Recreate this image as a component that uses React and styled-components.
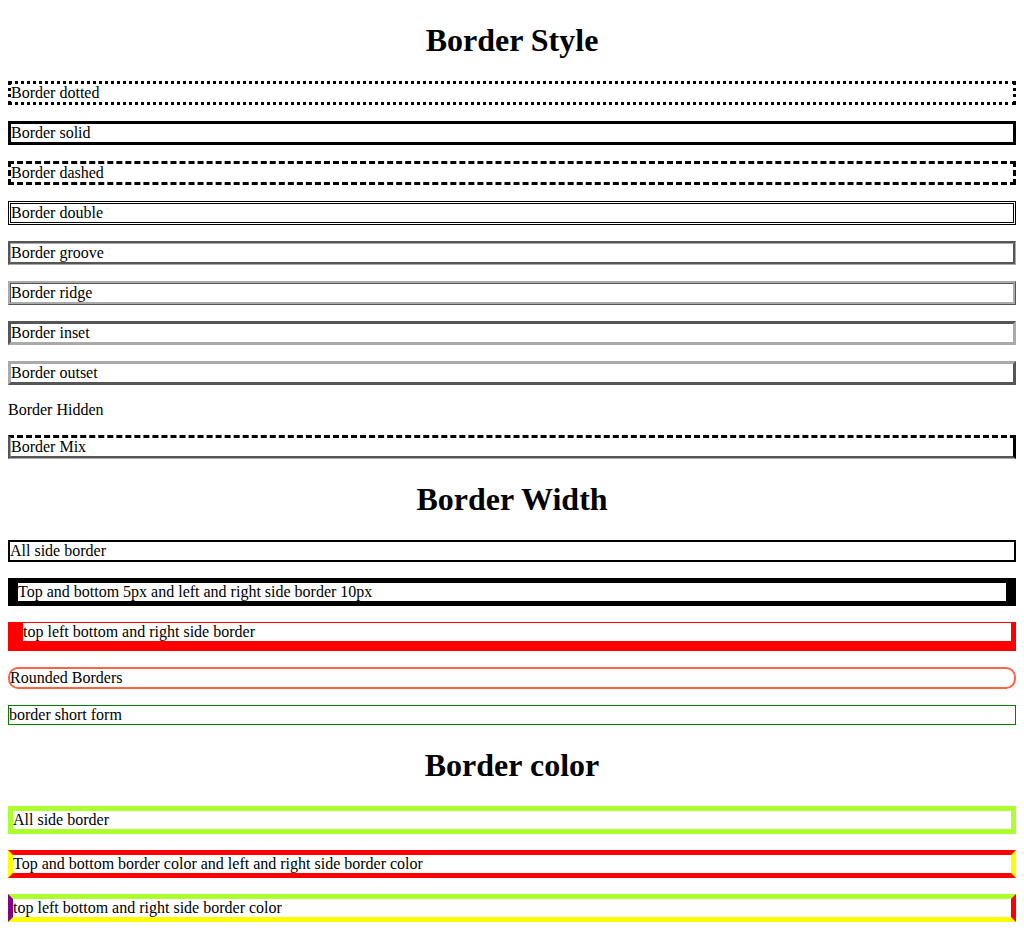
import styled, { createGlobalStyle } from 'styled-components';

const GlobalStyle = createGlobalStyle`
    body {
        margin: 0 8px 8px;
        font-family: "Liberation Serif", "Times New Roman", serif;
        font-size: 16px;
        color: #000000;
        background: #ffffff;
    }
`;

const Titulo = styled.h1`
    text-align: center;
    font-size: 2em;
    line-height: 38px;
    font-weight: bold;
    margin: 0.67em 0;
`;

const Caixa = styled.p`
    margin: 1em 0;
    border-style: ${(p) => p.$estilo || 'solid'};
    border-width: ${(p) => p.$largura || '3px'};
    border-color: ${(p) => p.$cor || '#000000'};
    border-radius: ${(p) => p.$raio || '0'};
`;

// cinza para os estilos 3D (groove, ridge, inset, outset)
const cinza = '#aaaaaa';

const estilos = [
    { texto: 'Border dotted', estilo: 'dotted' },
    { texto: 'Border solid', estilo: 'solid' },
    { texto: 'Border dashed', estilo: 'dashed' },
    { texto: 'Border double', estilo: 'double' },
    { texto: 'Border groove', estilo: 'groove', cor: cinza },
    { texto: 'Border ridge', estilo: 'ridge', cor: cinza },
    { texto: 'Border inset', estilo: 'inset', cor: cinza },
    { texto: 'Border outset', estilo: 'outset', cor: cinza },
    { texto: 'Border Hidden', estilo: 'hidden' },
    { texto: 'Border Mix', estilo: 'dashed solid groove groove', cor: `#000 #000 ${cinza} ${cinza}` },
];

const larguras = [
    { texto: 'All side border', largura: '2px' },
    { texto: 'Top and bottom 5px and left and right side border 10px', largura: '5px 10px' },
    { texto: 'top left bottom and right side border', largura: '1px 5px 10px 15px', cor: 'red' },
    { texto: 'Rounded Borders', largura: '2px', cor: 'tomato', raio: '10px' },
    { texto: 'border short form', largura: '1px', cor: 'green' },
];

const cores = [
    { texto: 'All side border', cor: 'greenyellow' },
    { texto: 'Top and bottom border color and left and right side border color', cor: 'red yellow' },
    { texto: 'top left bottom and right side border color', cor: 'greenyellow red yellow purple' },
];

const App = () => {
    return (
        <>
            <GlobalStyle />
            <Titulo>Border Style</Titulo>
            {estilos.map((item) => (
                <Caixa key={item.texto} $estilo={item.estilo} $cor={item.cor}>{item.texto}</Caixa>
            ))}

            <Titulo>Border Width</Titulo>
            {larguras.map((item) => (
                <Caixa key={item.texto} $largura={item.largura} $cor={item.cor} $raio={item.raio}>
                    {item.texto}
                </Caixa>
            ))}

            <Titulo>Border color</Titulo>
            {cores.map((item) => (
                <Caixa key={item.texto} $largura="5px" $cor={item.cor}>{item.texto}</Caixa>
            ))}
        </>
    );
};

export default App;
